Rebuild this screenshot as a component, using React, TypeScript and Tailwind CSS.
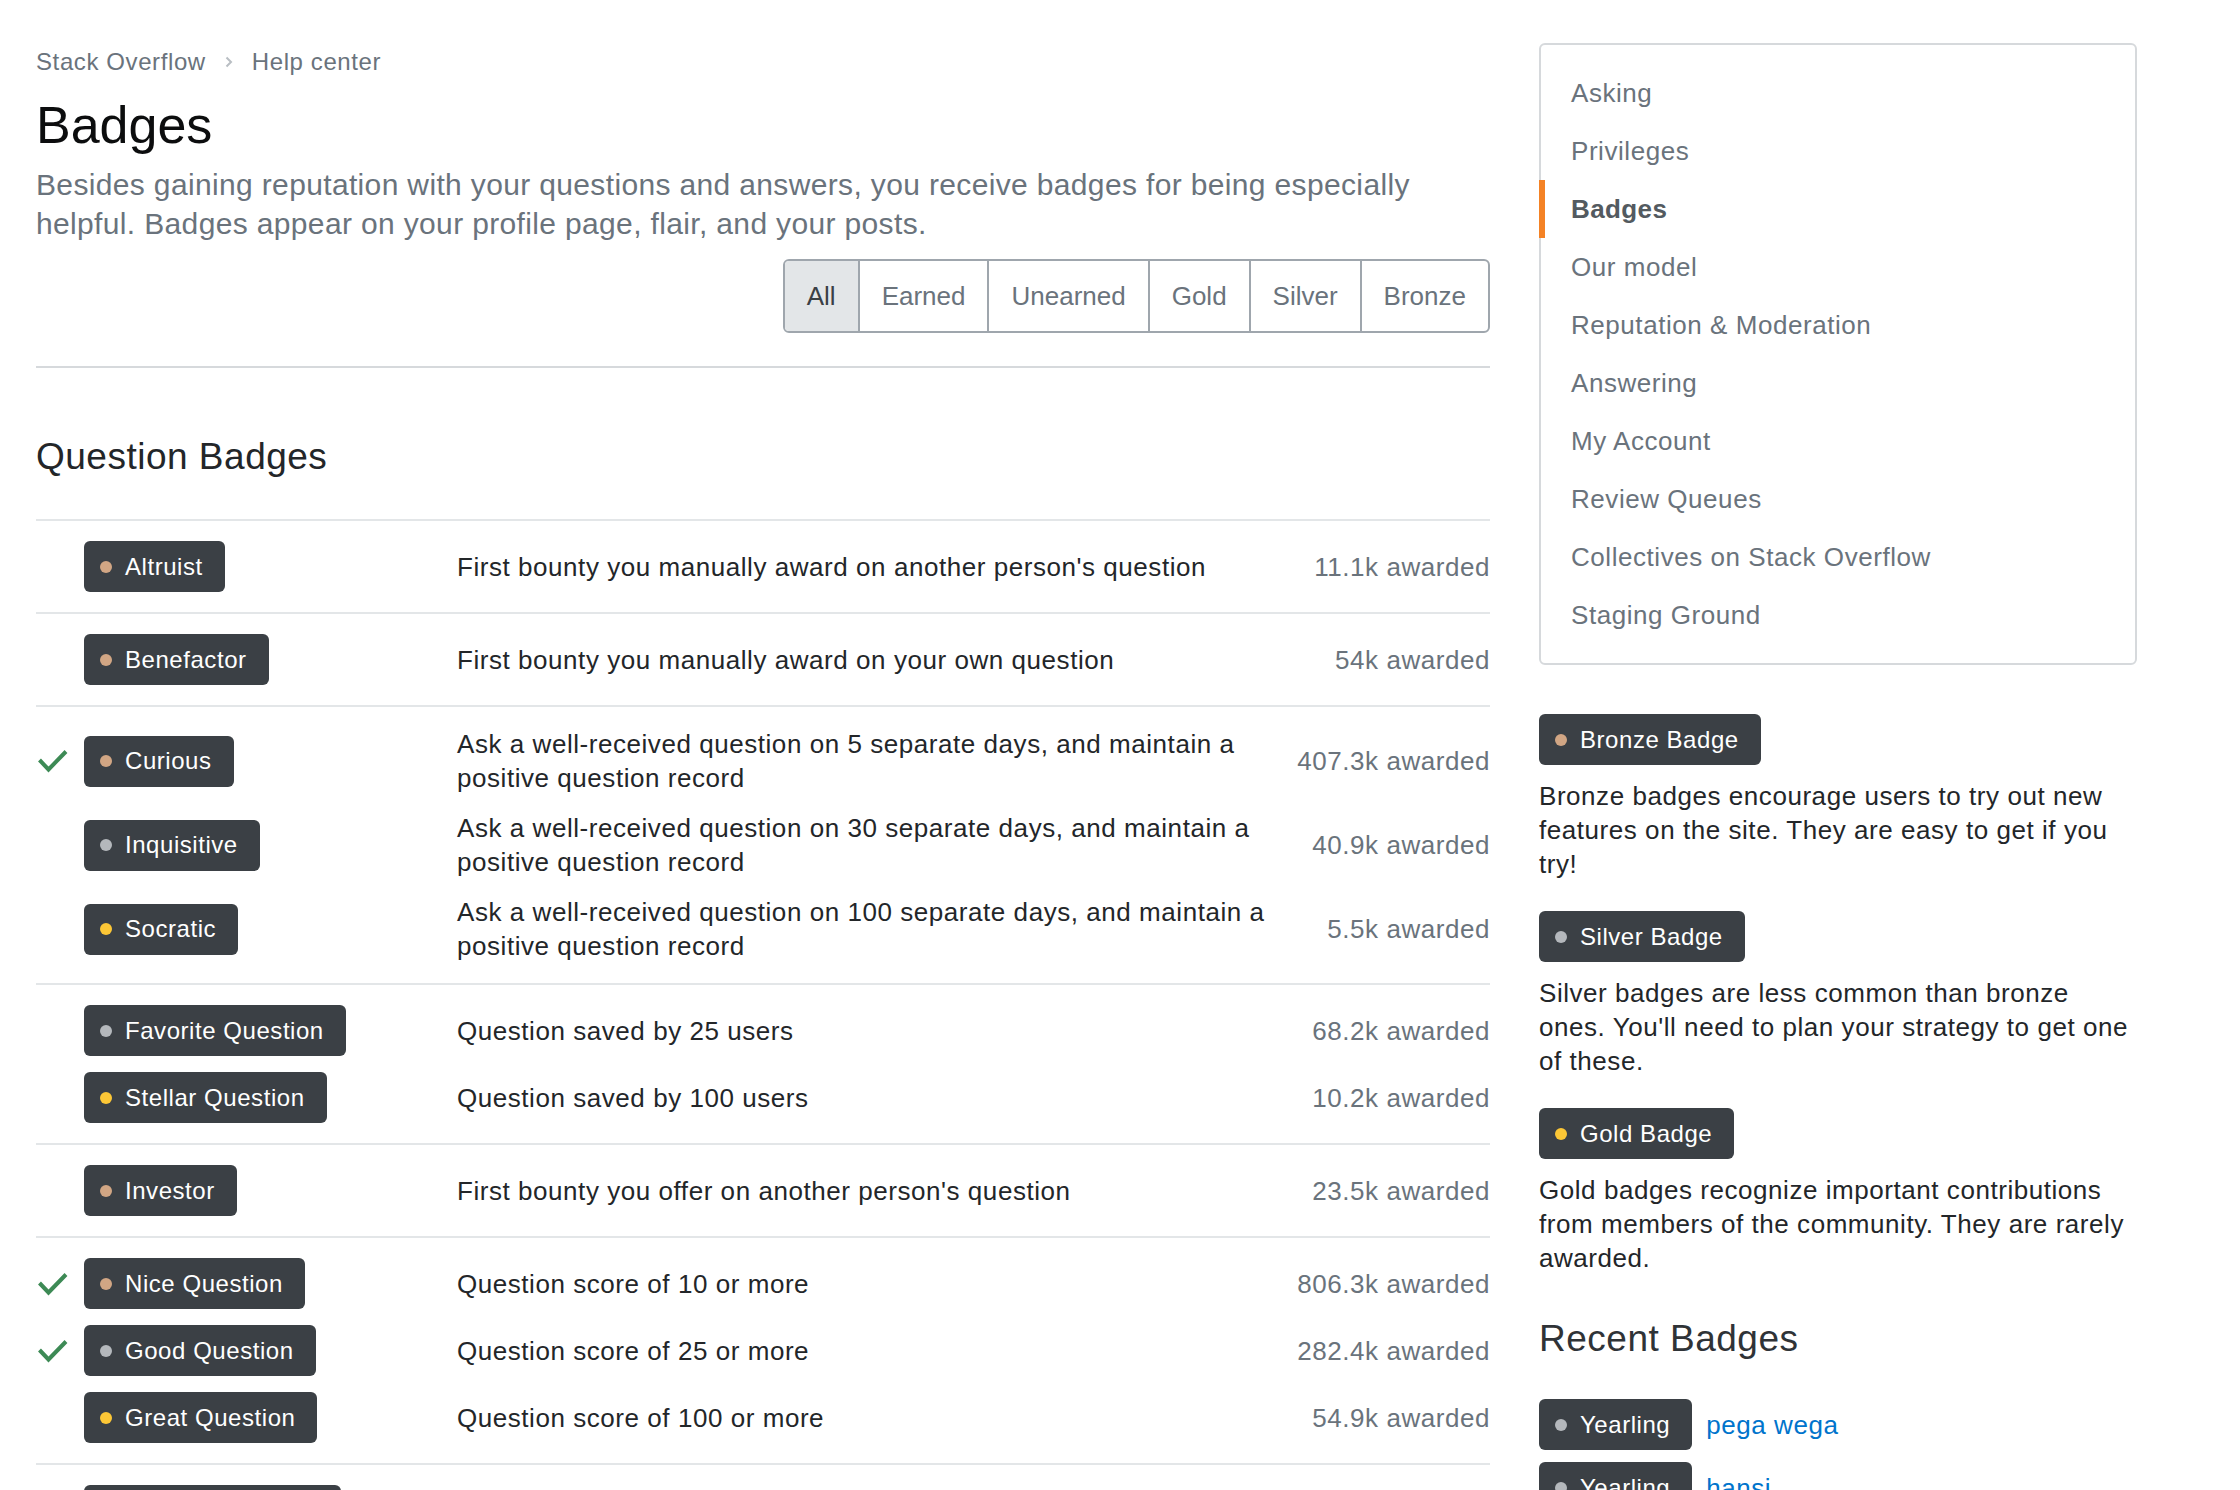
import React from "react";

type Tier = "bronze" | "silver" | "gold";

const dotColor: Record<Tier, string> = {
  bronze: "bg-[#d1a684]",
  silver: "bg-[#b4b8bc]",
  gold: "bg-[#fcc736]",
};

function Badge({ name, tier }: { name: string; tier: Tier }) {
  return (
    <span className="inline-flex h-[51px] items-center whitespace-nowrap rounded-[6px] bg-[#3b4045] pl-4 pr-[22px] text-[24px] leading-[34px] tracking-[0.55px] text-white">
      <span className={`mr-[13px] h-[12px] w-[12px] shrink-0 rounded-full ${dotColor[tier]}`} />
      {name}
    </span>
  );
}

function Check() {
  return (
    <svg width="31" height="24" viewBox="0 0 31 24" className="ml-[1px]">
      <polyline points="2.5,11 11.5,20.5 29,2.5" fill="none" stroke="#3d8a55" strokeWidth="4" strokeLinecap="butt" strokeLinejoin="miter" />
    </svg>
  );
}

type Item = { name: string; tier: Tier; desc: string; count: string; earned?: boolean };

const groups: Item[][] = [
  [{ name: "Altruist", tier: "bronze", desc: "First bounty you manually award on another person's question", count: "11.1k awarded" }],
  [{ name: "Benefactor", tier: "bronze", desc: "First bounty you manually award on your own question", count: "54k awarded" }],
  [
    { name: "Curious", tier: "bronze", desc: "Ask a well-received question on 5 separate days, and maintain a positive question record", count: "407.3k awarded", earned: true },
    { name: "Inquisitive", tier: "silver", desc: "Ask a well-received question on 30 separate days, and maintain a positive question record", count: "40.9k awarded" },
    { name: "Socratic", tier: "gold", desc: "Ask a well-received question on 100 separate days, and maintain a positive question record", count: "5.5k awarded" },
  ],
  [
    { name: "Favorite Question", tier: "silver", desc: "Question saved by 25 users", count: "68.2k awarded" },
    { name: "Stellar Question", tier: "gold", desc: "Question saved by 100 users", count: "10.2k awarded" },
  ],
  [{ name: "Investor", tier: "bronze", desc: "First bounty you offer on another person's question", count: "23.5k awarded" }],
  [
    { name: "Nice Question", tier: "bronze", desc: "Question score of 10 or more", count: "806.3k awarded", earned: true },
    { name: "Good Question", tier: "silver", desc: "Question score of 25 or more", count: "282.4k awarded", earned: true },
    { name: "Great Question", tier: "gold", desc: "Question score of 100 or more", count: "54.9k awarded" },
  ],
  [
    { name: "Popular Question", tier: "bronze", desc: "Question with 1,000 views", count: "1.3m awarded" },
    { name: "Notable Question", tier: "silver", desc: "Question with 2,500 views", count: "1.2m awarded" },
    { name: "Famous Question", tier: "gold", desc: "Question with 10,000 views", count: "699.8k awarded" },
  ],
];

const navItems = [
  "Asking",
  "Privileges",
  "Badges",
  "Our model",
  "Reputation & Moderation",
  "Answering",
  "My Account",
  "Review Queues",
  "Collectives on Stack Overflow",
  "Staging Ground",
];

const filters = ["All", "Earned", "Unearned", "Gold", "Silver", "Bronze"];

const tierInfo: { name: string; tier: Tier; text: string }[] = [
  { name: "Bronze Badge", tier: "bronze", text: "Bronze badges encourage users to try out new features on the site. They are easy to get if you try!" },
  { name: "Silver Badge", tier: "silver", text: "Silver badges are less common than bronze ones. You'll need to plan your strategy to get one of these." },
  { name: "Gold Badge", tier: "gold", text: "Gold badges recognize important contributions from members of the community. They are rarely awarded." },
];

const recent = [
  { name: "Yearling", tier: "silver" as Tier, user: "pega wega" },
  { name: "Yearling", tier: "silver" as Tier, user: "hansi" },
  { name: "Popular Question", tier: "bronze" as Tier, user: "Ryan" },
  { name: "Yearling", tier: "silver" as Tier, user: "jonrsharpe" },
];

export default function App() {
  return (
    <div className="min-h-screen w-full bg-white font-['Liberation_Sans',Arial,sans-serif] text-[#232629]">
      <div className="flex items-start pl-[36px]">
        <main className="w-[1454px] shrink-0 pt-[46px]">
          <nav className="flex items-center text-[24px] leading-[32px] tracking-[0.6px] text-[#6a737c]">
            <span>Stack Overflow</span>
            <svg width="8" height="12" viewBox="0 0 8 12" className="mx-[19px]">
              <polyline points="1.5,1.5 6,6 1.5,10.5" fill="none" stroke="#b9bec3" strokeWidth="2" />
            </svg>
            <span>Help center</span>
          </nav>
          <h1 className="mt-4 text-[52px] leading-[62px] text-[#0c0d0e]">Badges</h1>
          <p className="mt-[9px] max-w-[1440px] text-[30px] leading-[39px] tracking-[0.35px] text-[#6a737c]">
            Besides gaining reputation with your questions and answers, you receive badges for being especially helpful. Badges appear on your profile page, flair, and your posts.
          </p>
          <div className="mt-[16px] flex justify-end">
            <div className="flex h-[74px] overflow-hidden rounded-[6px] border-2 border-[#9fa6ad]">
              {filters.map((f, i) => (
                <div
                  key={f}
                  className={
                    i === 0
                      ? "flex items-center bg-[#e3e6e8] px-[22px] text-[26px] text-[#3b4045]"
                      : "flex items-center border-l-2 border-[#9fa6ad] px-[22px] text-[26px] text-[#6a737c]"
                  }
                >
                  {f}
                </div>
              ))}
            </div>
          </div>
          <div className="mt-[33px] h-[2px] bg-[#d6d9dc]" />
          <h2 className="mt-[66px] text-[37px] leading-[46px] tracking-[0.5px] text-[#232629]">Question Badges</h2>
          <div className="mt-[39px]">
            {groups.map((g, gi) => (
              <div key={gi} className="flex flex-col gap-4 border-t-2 border-[#e3e6e8] py-5">
                {g.map((it) => (
                  <div key={it.name} className="flex items-center">
                    <div className="flex w-[48px] shrink-0 items-center">{it.earned ? <Check /> : null}</div>
                    <div className="w-[373px] shrink-0">
                      <Badge name={it.name} tier={it.tier} />
                    </div>
                    <div className="flex-1 text-[26px] leading-[34px] tracking-[0.55px] text-[#232629]">{it.desc}</div>
                    <div className="ml-[16px] shrink-0 text-right text-[26px] leading-[34px] tracking-[0.55px] text-[#6a737c]">{it.count}</div>
                  </div>
                ))}
              </div>
            ))}
          </div>
        </main>

        <aside className="ml-[49px] w-[598px] shrink-0 pt-[43px]">
          <div className="rounded-[6px] border-2 border-[#d6d9dc] py-[19px]">
            {navItems.map((n) => (
              <div
                key={n}
                className={
                  n === "Badges"
                    ? "relative flex h-[58px] items-center pl-[30px] text-[26px] font-bold tracking-[0.4px] text-[#535a60]"
                    : "relative flex h-[58px] items-center pl-[30px] text-[26px] tracking-[0.55px] text-[#6a737c]"
                }
              >
                {n === "Badges" ? <span className="absolute left-[-2px] top-0 h-full w-[6px] bg-[#f48225]" /> : null}
                {n}
              </div>
            ))}
          </div>

          <div className="mt-[49px] flex flex-col gap-[30px]">
            {tierInfo.map((t) => (
              <div key={t.name}>
                <Badge name={t.name} tier={t.tier} />
                <p className="mt-[14px] pr-[2px] text-[26px] leading-[34px] tracking-[0.55px] text-[#232629]">{t.text}</p>
              </div>
            ))}
          </div>

          <h2 className="mt-[41px] text-[37px] leading-[46px] tracking-[0.5px] text-[#2f3337]">Recent Badges</h2>
          <div className="mt-[37px] flex flex-col gap-[12px]">
            {recent.map((r, i) => (
              <div key={i} className="flex items-center gap-[14px]">
                <Badge name={r.name} tier={r.tier} />
                <span className="text-[26px] leading-[34px] tracking-[0.55px] text-[#0074cc]">{r.user}</span>
              </div>
            ))}
          </div>
        </aside>
      </div>
    </div>
  );
}
